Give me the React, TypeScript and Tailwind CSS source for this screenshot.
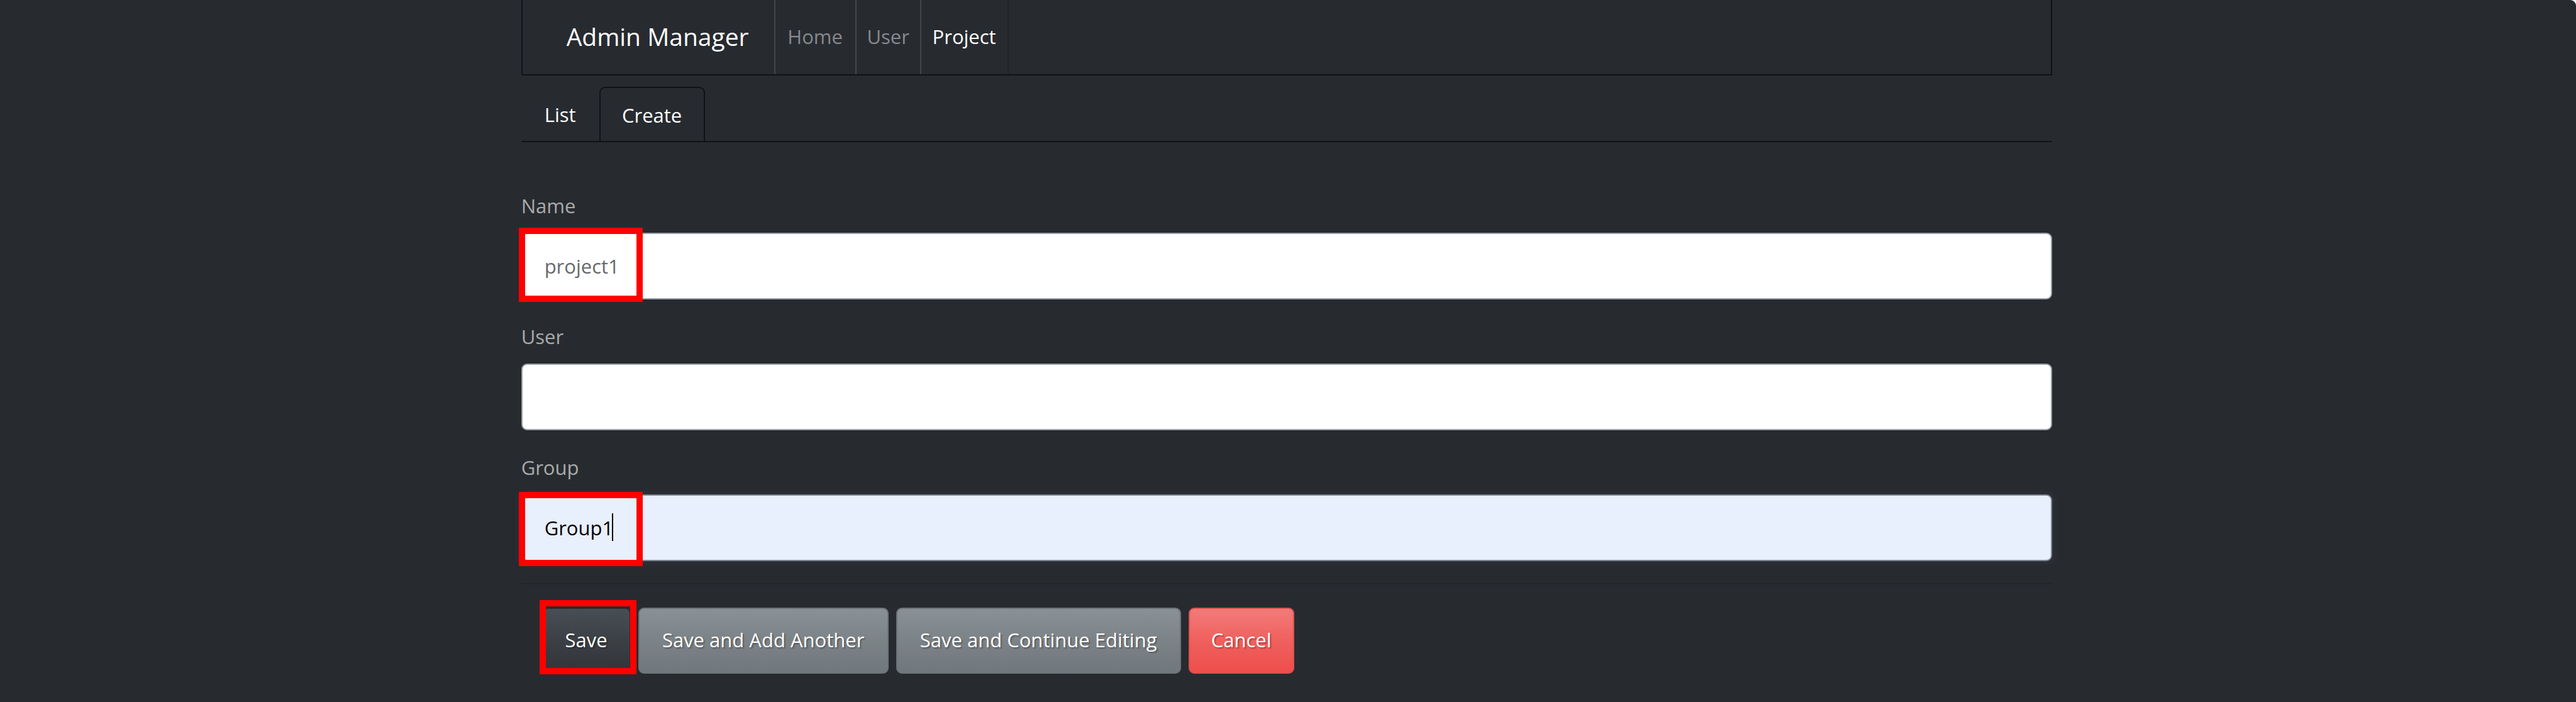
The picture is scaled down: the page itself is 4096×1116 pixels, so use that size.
import { useEffect, useRef } from 'react';

const label = 'mb-[18px] block text-[31px] leading-[50px] text-[#aaaaaa]';
const field =
  'block h-[106px] w-full rounded-[9px] border-2 border-[#9ba1a6] bg-white px-[35px] text-[31px] text-[#66696d] outline-none';
const button =
  'flex h-[105px] shrink-0 items-center justify-center rounded-[9px] border-2 pb-1 text-[31px] whitespace-nowrap text-white [text-shadow:2px_2px_2px_rgba(0,0,0,0.3)]';
const grey = 'border-[#6c7377] bg-linear-to-b from-[#8a9196] via-[#7c8387] to-[#70787d]';
const marker = 'pointer-events-none absolute h-[118px] border-[10px] border-[#ff0000]';

function NavItem({ text, className }: { text: string; className: string }) {
  return (
    <li className={`flex border-r-2 ${className}`}>
      <a href="#" className="flex flex-1 items-center justify-center pb-[2px]">
        {text}
      </a>
    </li>
  );
}

export default function App() {
  const group = useRef<HTMLInputElement>(null);
  useEffect(() => {
    group.current?.setSelectionRange(6, 6);
  }, []);

  return (
    <div className="bg-white">
      <div className="min-h-screen rounded-tr-[9px] bg-[#272b30] pr-1 font-['Open_Sans',sans-serif] text-[31px] leading-[52px] text-[#aaaaaa]">
        <div className="mx-auto w-[59.5%]">
          <nav className="flex h-[120px] border-x-2 border-b-2 border-[#101316] pl-[70px]">
            <a
              href="#"
              className="flex w-[332px] items-center border-r-2 border-[#43474b] pb-[2px] text-[39px] text-white"
            >
              Admin Manager
            </a>
            <ul className="flex">
              <NavItem text="Home" className="w-[129px] border-[#43474b] text-[#87898c]" />
              <NavItem text="User" className="w-[103px] border-[#43474b] text-[#87898c]" />
              <NavItem text="Project" className="w-[139px] border-[#202327] text-white" />
            </ul>
          </nav>

          <ul className="mt-[18px] flex border-b-2 border-[#101316] text-white">
            <li>
              <a href="#" className="flex h-[86px] w-[124px] items-center justify-center pt-[2px]">
                List
              </a>
            </li>
            <li>
              <a
                href="#"
                className="flex h-[86px] w-[168px] items-center justify-center rounded-t-[9px] border-x-2 border-t-2 border-[#101316] pt-[2px]"
              >
                Create
              </a>
            </li>
          </ul>

          <form className="pt-[76px]" onSubmit={(e) => e.preventDefault()}>
            <div className="relative mb-[34px]">
              <label htmlFor="name" className={label}>
                Name
              </label>
              <input id="name" type="text" defaultValue="project1" className={field} />
              <div className={`${marker} -bottom-1 -left-1 w-[197px]`} />
            </div>
            <div className="mb-[34px]">
              <label htmlFor="user" className={label}>
                User
              </label>
              <input id="user" type="text" className={field} />
            </div>
            <div className="relative">
              <label htmlFor="group" className={label}>
                Group
              </label>
              <input
                ref={group}
                id="group"
                type="text"
                defaultValue="Group1"
                className="block h-[106px] w-full rounded-[9px] border-2 border-[#7e8a96] bg-[#e8effd] px-[35px] text-[31px] text-black shadow-[0_0_10px_4px_#2f3338] outline-none"
              />
              <div className="absolute bottom-8 left-36 h-11 w-[2px] bg-black" />
              <div className={`${marker} -bottom-2 -left-1 w-[197px]`} />
            </div>

            <hr className="mt-[35px] border-t-2 border-[#222529]" />

            <div className="mt-[37px] flex gap-3 pl-[33px]">
              <div className="relative">
                <button
                  type="submit"
                  className={`${button} w-[141px] border-[#2a2e32] bg-linear-to-b from-[#484e56] via-[#3c4045] to-[#313539]`}
                >
                  Save
                </button>
                <div className={`${marker} -bottom-px -left-1 w-[154px]`} />
              </div>
              <button type="button" className={`${button} ${grey} w-[398px]`}>
                Save and Add Another
              </button>
              <button type="button" className={`${button} ${grey} w-[453px]`}>
                Save and Continue Editing
              </button>
              <button
                type="button"
                className={`${button} w-[168px] border-[#d9504e] bg-linear-to-b from-[#f27b7a] via-[#ef605e] to-[#ee4e4b]`}
              >
                Cancel
              </button>
            </div>
          </form>
        </div>
      </div>
    </div>
  );
}
